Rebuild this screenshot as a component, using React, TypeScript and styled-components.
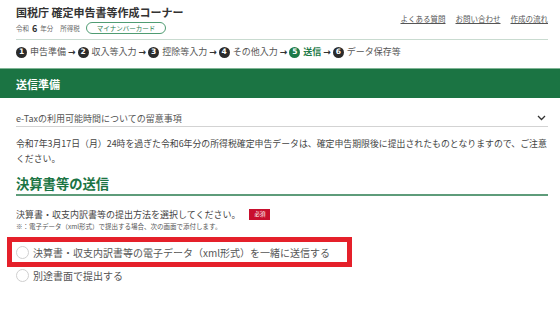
import { Fragment } from "react";
import styled, { createGlobalStyle } from "styled-components";

const GlobalStyle = createGlobalStyle`
  body {
    margin: 0;
    background: #fff;
    font-family: "Noto Sans CJK JP", "Noto Sans", sans-serif;
    color: #444;
  }
`;

const Page = styled.div`
  width: 560px;
`;

const Top = styled.div`
  padding: 0 12px 0 16px;
`;

const Header = styled.header`
  display: flex;
  justify-content: space-between;
  align-items: flex-start;
  padding-top: 4px;
  height: 35px;
  border-bottom: 1px solid #c9dbd0;
`;

const Title = styled.h1`
  margin: 0;
  font-size: 11px;
  line-height: 16px;
  font-weight: 700;
  color: #333;
  white-space: nowrap;
`;

const Meta = styled.div`
  display: flex;
  align-items: center;
  height: 12px;
  margin-top: 2px;
  color: #666;
`;

const Small = styled.span<{ $gap?: number }>`
  font-size: 6.5px;
  margin-right: ${(p) => p.$gap ?? 2}px;
`;

const Year = styled.span`
  font-size: 9px;
  font-weight: 700;
  color: #333;
  margin: 0 3px 0 1px;
`;

const Pill = styled.span`
  display: inline-flex;
  align-items: center;
  height: 10px;
  padding: 0 10px;
  margin-left: 4px;
  border: 1px solid #4f9c72;
  border-radius: 6px;
  font-size: 6.5px;
  color: #2c7d50;
`;

const Links = styled.nav`
  display: flex;
  gap: 10px;
  margin-top: 10px;
  font-size: 7.5px;
  line-height: 10px;
`;

const HeadLink = styled.a`
  color: #555;
  text-decoration: underline;
`;

const Steps = styled.ol`
  list-style: none;
  margin: 0;
  padding: 6px 0 10px;
  display: flex;
  align-items: center;
  gap: 2px;
  font-size: 9px;
  line-height: 12px;
  color: #555;
`;

const Step = styled.li<{ $active?: boolean }>`
  display: flex;
  align-items: center;
  gap: 3px;
  color: ${(p) => (p.$active ? "#1d7a47" : "#555")};
  font-weight: ${(p) => (p.$active ? 700 : 400)};
`;

const Num = styled.span<{ $active?: boolean }>`
  display: inline-flex;
  align-items: center;
  justify-content: center;
  width: 11px;
  height: 11px;
  border-radius: 50%;
  background: ${(p) => (p.$active ? "#1d7a47" : "#2b2b2b")};
  color: #fff;
  font-family: "DejaVu Sans", sans-serif;
  font-size: 7.5px;
  font-weight: 700;
`;

const Arrow = styled.span`
  font-family: "DejaVu Sans", sans-serif;
  font-weight: 700;
  font-size: 9px;
  color: #333;
`;

const Band = styled.div`
  height: 29px;
  display: flex;
  align-items: center;
  padding-left: 16px;
  background: #1b7443;
  border-top: 1px solid #7fb595;
  color: #fff;
  font-size: 11px;
  font-weight: 700;
`;

const Content = styled.main`
  padding: 12px 12px 0 16px;
`;

const Accordion = styled.div`
  display: flex;
  align-items: center;
  justify-content: space-between;
  height: 16px;
  border-bottom: 1px solid #d3d3d3;
  font-size: 9px;
  color: #555;
  padding-right: 2px;
`;

const Notice = styled.p`
  margin: 9px 0 0;
  font-size: 8.9px;
  line-height: 15px;
  color: #444;
`;

const Heading = styled.h2`
  margin: 9px 0 0;
  font-size: 13.3px;
  line-height: 18px;
  font-weight: 700;
  color: #1b7443;
  padding-bottom: 1px;
  border-bottom: 2px solid #5e9c7a;
`;

const Question = styled.div`
  display: flex;
  align-items: center;
  margin-top: 11px;
  height: 14px;
  font-size: 9px;
  color: #444;
`;

const Required = styled.span`
  display: inline-flex;
  align-items: center;
  justify-content: center;
  width: 21px;
  height: 11px;
  margin-left: 9px;
  background: #c8102e;
  color: #fff;
  font-size: 5.5px;
`;

const Note = styled.div`
  font-size: 6.5px;
  line-height: 10px;
  color: #555;
`;

const Highlight = styled.div`
  margin: 6px 0 0 -9px;
  width: 331px;
  height: 20px;
  padding-left: 4px;
  display: flex;
  align-items: center;
  border: 5px solid #e5202a;
`;

const Option = styled.label`
  display: flex;
  align-items: center;
  gap: 4px;
  height: 16px;
  font-size: 10px;
  color: #555;
  white-space: nowrap;
`;

const Radio = styled.span`
  width: 11px;
  height: 11px;
  border: 1px solid #cfcfcf;
  border-radius: 50%;
  background: #fff;
`;

const steps = ["申告準備", "収入等入力", "控除等入力", "その他入力", "送信", "データ保存等"];

function Chevron() {
  return (
    <svg width="9" height="6" viewBox="0 0 9 6">
      <polyline points="1,1 4.5,4.5 8,1" fill="none" stroke="#333" strokeWidth="1.3" />
    </svg>
  );
}

export default function App() {
  return (
    <Page>
      <GlobalStyle />
      <Top>
        <Header>
          <div>
            <Title>国税庁 確定申告書等作成コーナー</Title>
            <Meta>
              <Small>令和</Small>
              <Year>6</Year>
              <Small $gap={7}>年分</Small>
              <Small>所得税</Small>
              <Pill>マイナンバーカード</Pill>
            </Meta>
          </div>
          <Links>
            <HeadLink>よくある質問</HeadLink>
            <HeadLink>お問い合わせ</HeadLink>
            <HeadLink>作成の流れ</HeadLink>
          </Links>
        </Header>
        <Steps>
          {steps.map((s, i) => (
            <Fragment key={s}>
              {i > 0 && <Arrow>→</Arrow>}
              <Step $active={i === 4}>
                <Num $active={i === 4}>{i + 1}</Num>
                {s}
              </Step>
            </Fragment>
          ))}
        </Steps>
      </Top>
      <Band>送信準備</Band>
      <Content>
        <Accordion>
          <span>e-Taxの利用可能時間についての留意事項</span>
          <Chevron />
        </Accordion>
        <Notice>
          令和7年3月17日（月）24時を過ぎた令和6年分の所得税確定申告データは、確定申告期限後に提出されたものとなりますので、ご注意ください。
        </Notice>
        <Heading>決算書等の送信</Heading>
        <Question>
          決算書・収支内訳書等の提出方法を選択してください。
          <Required>必須</Required>
        </Question>
        <Note>※：電子データ（xml形式）で提出する場合、次の画面で添付します。</Note>
        <Highlight>
          <Option>
            <Radio />
            決算書・収支内訳書等の電子データ（xml形式）を一緒に送信する
          </Option>
        </Highlight>
        <Option>
          <Radio />
          別途書面で提出する
        </Option>
      </Content>
    </Page>
  );
}
